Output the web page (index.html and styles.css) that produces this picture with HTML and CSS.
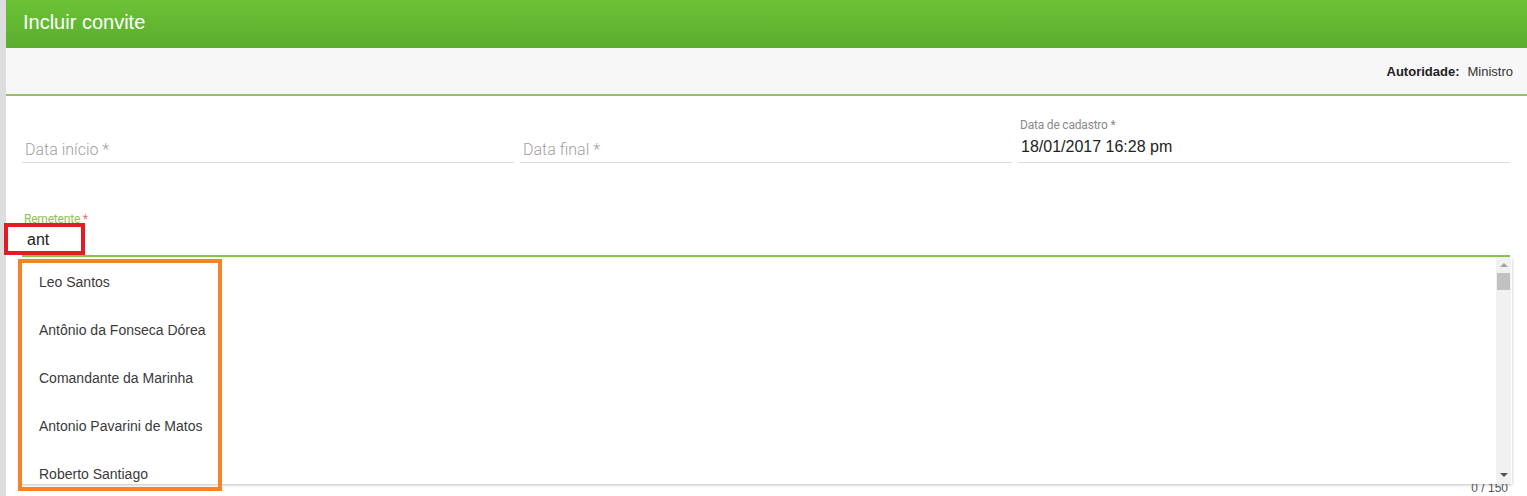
FILE: index.html
```html
<!DOCTYPE html>
<html lang="pt-BR">
<head>
<meta charset="utf-8">
<title>Incluir convite</title>
<link rel="stylesheet" href="styles.css">
</head>
<body>
<div class="page">
  <div class="strip"></div>
  <div class="main">
    <header class="header">Incluir convite</header>
    <div class="subbar"><b>Autoridade:</b><span>Ministro</span></div>
    <div class="form">
      <div class="row">
        <div class="field">
          <div class="label"></div>
          <div class="input placeholder">Data início *</div>
        </div>
        <div class="field">
          <div class="label"></div>
          <div class="input placeholder">Data final *</div>
        </div>
        <div class="field">
          <div class="label">Data de cadastro *</div>
          <div class="input value">18/01/2017 16:28 pm</div>
        </div>
      </div>
      <div class="field focused">
        <div class="label green">Remetente <span class="req">*</span></div>
        <div class="input value">ant</div>
        <div class="menu">
          <div class="items">
            <div class="item">Leo Santos</div>
            <div class="item">Antônio da Fonseca Dórea</div>
            <div class="item">Comandante da Marinha</div>
            <div class="item">Antonio Pavarini de Matos</div>
            <div class="item">Roberto Santiago</div>
          </div>
          <div class="scroll">
            <div class="arrow up"></div>
            <div class="thumb"></div>
            <div class="track"></div>
            <div class="arrow down"></div>
          </div>
        </div>
      </div>
      <div class="counter">0 / 150</div>
    </div>
  </div>
</div>
<div class="mark red"></div>
<div class="mark orange"></div>
</body>
</html>
```
FILE: styles.css
```css
html, body {
  margin: 0;
  padding: 0;
  background: #ffffff;
  font-family: "Liberation Sans", Arial, sans-serif;
  width: 1527px;
  height: 496px;
  overflow: hidden;
}
.page {
  display: flex;
  height: 496px;
}
.strip {
  width: 6px;
  background: #dddddd;
  flex: none;
}
.main {
  flex: 1;
  display: flex;
  flex-direction: column;
  min-width: 0;
}
.header {
  height: 48px;
  box-sizing: border-box;
  padding-left: 17px;
  display: flex;
  align-items: center;
  color: #ffffff;
  font-size: 20px;
  background: linear-gradient(#6cc236, #5aad2e);
  padding-bottom: 3px;
}
.subbar {
  height: 46px;
  background: #f7f7f7;
  border-bottom: 2px solid #94bd64;
  display: flex;
  justify-content: flex-end;
  align-items: center;
  gap: 8px;
  padding-right: 14px;
  font-size: 13px;
  color: #333333;
}
.subbar b { color: #222; }
.form {
  padding: 22px 17px 0 16px;
  display: flex;
  flex-direction: column;
}
.row {
  display: grid;
  grid-template-columns: 1fr 1fr 1fr;
  gap: 6px;
  margin-bottom: 48px;
}
.field {
  position: relative;
  border-bottom: 1px solid #dddddd;
}
.label {
  height: 14px;
  font-family: Roboto, "Liberation Sans", sans-serif;
  font-weight: 400;
  font-size: 12px;
  line-height: 14px;
  color: #8a8a8a;
  padding-left: 2px;
  letter-spacing: -0.2px;
}
.label.green { color: #8bc34a; padding-top: 1px; }
.req { color: #e57373; }
.input {
  height: 30px;
  line-height: 30px;
  padding-left: 3px;
  font-size: 16px;
}
.placeholder {
  font-family: Roboto, "Liberation Sans", sans-serif;
  font-weight: 300;
  color: #a0a0a0;
  padding-top: 3px;
  box-sizing: border-box;
}
.value { color: #222222; }
.focused {
  border-bottom: 2px solid #8bc34a;
}
.focused .label { height: 13px; }
.focused .input { padding-left: 5px; }
.menu {
  position: absolute;
  left: -2px;
  right: -2px;
  top: 47px;
  height: 226px;
  background: #ffffff;
  box-shadow: 0 1px 3px rgba(0,0,0,0.25);
  display: flex;
  overflow: hidden;
  z-index: 2;
}
.items { flex: 1; }
.item {
  height: 48px;
  line-height: 48px;
  padding-left: 19px;
  font-size: 14px;
  color: #3a3a3a;
}
.scroll {
  width: 15px;
  background: #f1f1f1;
  display: flex;
  flex-direction: column;
  align-items: center;
  margin-right: 1px;
}
.arrow {
  width: 0;
  height: 0;
  border-left: 4px solid transparent;
  border-right: 4px solid transparent;
}
.arrow.up {
  margin-top: 5px;
  border-bottom: 4px solid #a3a3a3;
}
.arrow.down {
  margin-bottom: 7px;
  border-top: 4px solid #505050;
}
.thumb {
  margin-top: 6px;
  width: 13px;
  height: 17px;
  background: #c1c1c1;
}
.track { flex: 1; }
.counter {
  margin-top: 224px;
  text-align: right;
  font-size: 12px;
  color: #555555;
  padding-right: 2px;
}
.mark {
  position: absolute;
  box-sizing: border-box;
  z-index: 5;
}
.mark.red {
  left: 4px;
  top: 223px;
  width: 81px;
  height: 32px;
  border: 4px solid #e31b23;
}
.mark.orange {
  left: 18px;
  top: 259px;
  width: 204px;
  height: 232px;
  border: 4px solid #f6832a;
}
```
